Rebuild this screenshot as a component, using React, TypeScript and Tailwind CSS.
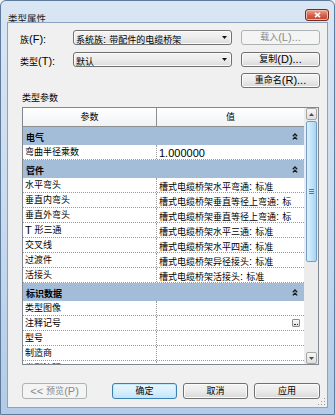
import React from "react";

const CJK = /[\u2E80-\u9FFF\uFF00-\uFFEF\u3000-\u303F]/;
const SPLIT = /[\u2E80-\u9FFF\uFF00-\uFFEF\u3000-\u303F]+|[^\u2E80-\u9FFF\uFF00-\uFFEF\u3000-\u303F]+/g;

function T({ s }: { s: string }) {
  const parts = s.match(SPLIT) || [];
  return (
    <>
      {parts.map((p, i) =>
        CJK.test(p) ? (
          <span key={i} className="text-[9px]">
            {p}
          </span>
        ) : (
          <span key={i} className="text-[11px] whitespace-pre">
            {p}
          </span>
        )
      )}
    </>
  );
}

function Btn({
  label,
  className = "",
  disabled = false,
  primary = false,
}: {
  label: string;
  className?: string;
  disabled?: boolean;
  primary?: boolean;
}) {
  const base =
    "shrink-0 rounded-[3px] border flex items-center justify-center leading-none whitespace-nowrap";
  const look = disabled
    ? "border-[#adb2b5] bg-[#f4f4f4] text-[#8a8a8a]"
    : primary
    ? "border-[#3c7fb1] bg-linear-to-b from-[#eaf6fd] via-[#d9effc] to-[#bee6fd] shadow-[inset_0_0_0_1px_#c2e8fb]"
    : "border-[#707070] bg-linear-to-b from-[#f4f4f4] via-[#ebebeb] to-[#d8d8d8] shadow-[inset_0_0_0_1px_#fbfbfb]";
  return (
    <div className={`${base} ${look} ${className}`}>
      <T s={label} />
    </div>
  );
}

function Combo({ text }: { text: string }) {
  return (
    <div className="w-[159px] h-[15px] shrink-0 rounded-[3px] border border-[#707070] bg-linear-to-b from-[#f4f4f4] via-[#ececec] to-[#dcdcdc] shadow-[inset_0_0_0_1px_#fbfbfb] flex items-center pl-[2px] pr-[4px] leading-none">
      <span className="flex-1 whitespace-nowrap overflow-hidden">
        <T s={text} />
      </span>
      <svg width="5" height="3" viewBox="0 0 5 3">
        <path d="M0 0h5L2.5 3z" fill="#111" />
      </svg>
    </div>
  );
}

function Collapse() {
  return (
    <svg width="6" height="7" viewBox="0 0 6 7">
      <path
        d="M0.8 3.2 L3 1 L5.2 3.2 M0.8 6.4 L3 4.2 L5.2 6.4"
        stroke="#1a1a1a"
        strokeWidth="1.3"
        fill="none"
      />
    </svg>
  );
}

type Row = { k: string; v: string; btn?: boolean };
type Group = { name: string; rows: Row[] };

const groups: Group[] = [
  { name: "电气", rows: [{ k: "弯曲半径乘数", v: "1.000000" }] },
  {
    name: "管件",
    rows: [
      { k: "水平弯头", v: "槽式电缆桥架水平弯通: 标准" },
      { k: "垂直内弯头", v: "槽式电缆桥架垂直等径上弯通: 标" },
      { k: "垂直外弯头", v: "槽式电缆桥架垂直等径上弯通: 标" },
      { k: "T 形三通", v: "槽式电缆桥架水平三通: 标准" },
      { k: "交叉线", v: "槽式电缆桥架水平四通: 标准" },
      { k: "过渡件", v: "槽式电缆桥架异径接头: 标准" },
      { k: "活接头", v: "槽式电缆桥架活接头: 标准" },
    ],
  },
  {
    name: "标识数据",
    rows: [
      { k: "类型图像", v: "" },
      { k: "注释记号", v: "", btn: true },
      { k: "型号", v: "" },
      { k: "制造商", v: "" },
      { k: "类型注释", v: "" },
    ],
  },
];

export default function App() {
  return (
    <div className="w-[335px] h-[415px] overflow-hidden bg-[#f0f0f0] font-['Liberation_Sans','Noto_Sans_CJK_SC',sans-serif] text-[#000]">
      <div className="w-full h-full flex flex-col rounded-t-[6px] border border-[#5f7b9c] bg-linear-to-b from-[#d9e6f4] via-[#c9dbef] to-[#b3cbe6] px-[6px] pb-[6px]">
        {/* Title bar */}
        <div className="h-[21px] shrink-0 flex items-start justify-between">
          <div className="pt-[8px] pl-[1px] leading-none text-[#1e1e1e]">
            <span className="text-[9.5px]">类型属性</span>
          </div>
          <div className="mt-[8px] mr-[-1px] w-[24px] h-[12px] rounded-[3px] border border-[#7a2a20] bg-linear-to-b from-[#e9a797] via-[#d4654f] to-[#c2402a] flex items-center justify-center shadow-[inset_0_0_0_1px_#f0b9ab]">
            <svg width="7" height="6" viewBox="0 0 7 6">
              <path d="M1 0.8 L6 5.2 M6 0.8 L1 5.2" stroke="#fff" strokeWidth="1.6" />
            </svg>
          </div>
        </div>

        {/* Client area */}
        <div className="relative flex-1 bg-[#f0f0f0] border border-[#8ba3bf] flex flex-col">
          {/* Row 1 */}
          <div className="mt-[7px] flex items-center h-[15px]">
            <div className="w-[65px] pl-[12px] leading-none whitespace-nowrap">
              <T s="族(F):" />
            </div>
            <Combo text="系统族: 带配件的电缆桥架" />
            <Btn className="ml-[9px] w-[79px] h-[15px]" disabled label="载入(L)..." />
          </div>
          {/* Row 2 */}
          <div className="mt-[7px] flex items-center h-[15px]">
            <div className="w-[65px] pl-[12px] leading-none whitespace-nowrap">
              <T s="类型(T):" />
            </div>
            <Combo text="默认" />
            <Btn className="ml-[9px] w-[79px] h-[15px]" label="复制(D)..." />
          </div>
          {/* Row 3 */}
          <div className="mt-[6px] flex items-center h-[15px]">
            <Btn className="ml-[233px] w-[79px] h-[15px]" label="重命名(R)..." />
          </div>

          <div className="mt-[4px] h-[12px] pl-[14px] flex items-center leading-none">
            <T s="类型参数" />
          </div>

          {/* Property grid */}
          <div className="mt-[3px] ml-[14px] w-[297px] h-[258px] border border-[#828790] bg-white flex">
            <div className="w-[281px] flex flex-col overflow-hidden">
              {/* header */}
              <div className="h-[19px] shrink-0 flex border-b border-[#8e8f8f] bg-linear-to-b from-[#ffffff] to-[#f1f2f4]">
                <div className="w-[134px] border-r border-[#8e8f8f] flex items-center justify-center leading-none">
                  <T s="参数" />
                </div>
                <div className="flex-1 flex items-center justify-center leading-none">
                  <T s="值" />
                </div>
              </div>
              {/* body */}
              <div className="flex-1 overflow-hidden">
                {groups.map((g) => (
                  <div key={g.name}>
                    <div className="h-[18px] bg-[#a3bcd7] flex items-center pl-[3px] pr-[6px] leading-none">
                      <span className="flex-1 font-bold">
                        <T s={g.name} />
                      </span>
                      <Collapse />
                    </div>
                    {g.rows.map((r) => (
                      <div
                        key={r.k}
                        className="h-[15px] flex border-b border-dotted border-[#9a9a9a]"
                      >
                        <div className="w-[134px] border-r border-dotted border-[#9a9a9a] pl-[2px] flex items-center leading-none whitespace-nowrap overflow-hidden">
                          <T s={r.k} />
                        </div>
                        <div className="flex-1 pl-[2px] pr-[4px] flex items-center leading-none whitespace-nowrap overflow-hidden">
                          <span className="flex-1">
                            <T s={r.v} />
                          </span>
                          {r.btn && (
                            <div className="w-[8px] h-[8px] rounded-[1px] border border-[#8a8a8a] bg-linear-to-b from-[#fafafa] to-[#dedede] flex items-end justify-center pb-[1px]">
                              <div className="w-[4px] h-[1px] border-t border-dotted border-[#333]" />
                            </div>
                          )}
                        </div>
                      </div>
                    ))}
                  </div>
                ))}
              </div>
            </div>
            {/* scrollbar */}
            <div className="w-[14px] bg-[#ececec] flex flex-col pl-[2px] pr-[1px] py-0">
              <div className="h-[12px] shrink-0 rounded-[2px] border border-[#a6a6a6] bg-linear-to-b from-[#f7f7f7] to-[#dedede] flex items-center justify-center">
                <svg width="5" height="3" viewBox="0 0 5 3">
                  <path d="M0 3h5L2.5 0z" fill="#4d4d4d" />
                </svg>
              </div>
              <div className="flex-1 flex flex-col pt-[1px] pb-[1px]">
                <div className="h-[141px] rounded-[2px] border border-[#6f9fc6] bg-linear-to-r from-[#dcf0fc] via-[#c3e4f8] to-[#a9d3ef] flex items-center justify-center">
                  <div className="flex flex-col gap-[1px]">
                    <div className="w-[5px] h-[1px] bg-[#4e7ea5]" />
                    <div className="w-[5px] h-[1px] bg-[#4e7ea5]" />
                    <div className="w-[5px] h-[1px] bg-[#4e7ea5]" />
                  </div>
                </div>
                <div className="flex-1" />
              </div>
              <div className="h-[12px] shrink-0 rounded-[2px] border border-[#a6a6a6] bg-linear-to-b from-[#f7f7f7] to-[#dedede] flex items-center justify-center">
                <svg width="5" height="3" viewBox="0 0 5 3">
                  <path d="M0 0h5L2.5 3z" fill="#4d4d4d" />
                </svg>
              </div>
            </div>
          </div>

          {/* Bottom buttons */}
          <div className="mt-[18px] flex items-center">
            <Btn className="ml-[14px] w-[65px] h-[16px]" disabled label="<< 预览(P)" />
            <Btn className="ml-[25px] w-[65px] h-[16px]" primary label="确定" />
            <Btn className="ml-[6px] w-[65px] h-[16px]" label="取消" />
            <Btn className="ml-[6px] w-[66px] h-[16px]" label="应用" />
          </div>

          {/* resize grip */}
          <svg
            className="absolute right-[1px] bottom-[1px]"
            width="8"
            height="8"
            viewBox="0 0 8 8"
          >
            <rect x="6" y="0" width="1" height="1" fill="#9a9a9a" />
            <rect x="3" y="3" width="1" height="1" fill="#9a9a9a" />
            <rect x="6" y="3" width="1" height="1" fill="#9a9a9a" />
            <rect x="0" y="6" width="1" height="1" fill="#9a9a9a" />
            <rect x="3" y="6" width="1" height="1" fill="#9a9a9a" />
            <rect x="6" y="6" width="1" height="1" fill="#9a9a9a" />
          </svg>
        </div>
      </div>
    </div>
  );
}
